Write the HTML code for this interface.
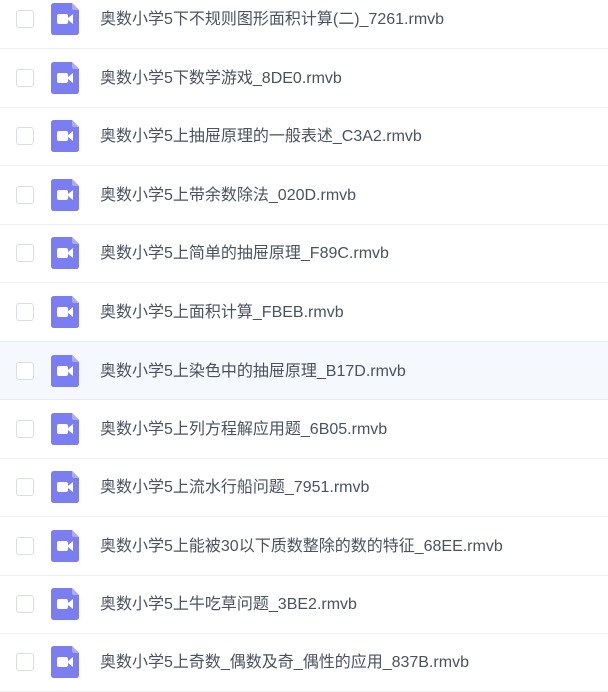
<!DOCTYPE html>
<html><head><meta charset="utf-8"><style>
body{margin:0;width:608px;height:677px;overflow:hidden;background:#fff;font-family:"Liberation Sans","Noto Sans CJK SC",sans-serif;position:relative}
.r{position:absolute;left:0;width:608px;height:59px;border-bottom:1px solid #eef0f4;box-sizing:border-box}
.r.h{background:#f5f8fd;border-top:1px solid #e3ecf8;border-bottom:1px solid #e3ecf8}
.cb{position:absolute;left:16px;top:20px;width:16px;height:16px;border:1px solid #d9dde4;border-radius:3px;background:#fff}
.ic{position:absolute;left:51px;top:13px}
.t{position:absolute;left:100px;top:20px;font-size:16px;color:#4a5261;white-space:nowrap;line-height:20px}
</style></head><body>
<svg width="0" height="0" style="position:absolute"><defs><g id="v"><path d="M3 0H21L28 7V29Q28 32 25 32H3Q0 32 0 29V3Q0 0 3 0Z" fill="#7b7ef0"/><path d="M21 0V5Q21 7 23 7H28Z" fill="#a9abf6"/><rect x="6" y="11" width="11" height="10" rx="2" fill="#fff"/><path d="M17 15L22 11V21L17 17Z" fill="#fff"/></g></defs></svg>
<div class="r" style="top:-10px"><div class="cb"></div><svg class="ic" width="28" height="32"><use href="#v"/></svg><div class="t">奥数小学5下不规则图形面积计算(二)_7261.rmvb</div></div>
<div class="r" style="top:49px"><div class="cb"></div><svg class="ic" width="28" height="32"><use href="#v"/></svg><div class="t">奥数小学5下数学游戏_8DE0.rmvb</div></div>
<div class="r" style="top:107px"><div class="cb"></div><svg class="ic" width="28" height="32"><use href="#v"/></svg><div class="t">奥数小学5上抽屉原理的一般表述_C3A2.rmvb</div></div>
<div class="r" style="top:166px"><div class="cb"></div><svg class="ic" width="28" height="32"><use href="#v"/></svg><div class="t">奥数小学5上带余数除法_020D.rmvb</div></div>
<div class="r" style="top:224px"><div class="cb"></div><svg class="ic" width="28" height="32"><use href="#v"/></svg><div class="t">奥数小学5上简单的抽屉原理_F89C.rmvb</div></div>
<div class="r" style="top:283px"><div class="cb"></div><svg class="ic" width="28" height="32"><use href="#v"/></svg><div class="t">奥数小学5上面积计算_FBEB.rmvb</div></div>
<div class="r h" style="top:341px"><div class="cb"></div><svg class="ic" width="28" height="32"><use href="#v"/></svg><div class="t">奥数小学5上染色中的抽屉原理_B17D.rmvb</div></div>
<div class="r" style="top:400px"><div class="cb"></div><svg class="ic" width="28" height="32"><use href="#v"/></svg><div class="t">奥数小学5上列方程解应用题_6B05.rmvb</div></div>
<div class="r" style="top:458px"><div class="cb"></div><svg class="ic" width="28" height="32"><use href="#v"/></svg><div class="t">奥数小学5上流水行船问题_7951.rmvb</div></div>
<div class="r" style="top:517px"><div class="cb"></div><svg class="ic" width="28" height="32"><use href="#v"/></svg><div class="t">奥数小学5上能被30以下质数整除的数的特征_68EE.rmvb</div></div>
<div class="r" style="top:575px"><div class="cb"></div><svg class="ic" width="28" height="32"><use href="#v"/></svg><div class="t">奥数小学5上牛吃草问题_3BE2.rmvb</div></div>
<div class="r" style="top:633px"><div class="cb"></div><svg class="ic" width="28" height="32"><use href="#v"/></svg><div class="t">奥数小学5上奇数_偶数及奇_偶性的应用_837B.rmvb</div></div>
</body></html>
